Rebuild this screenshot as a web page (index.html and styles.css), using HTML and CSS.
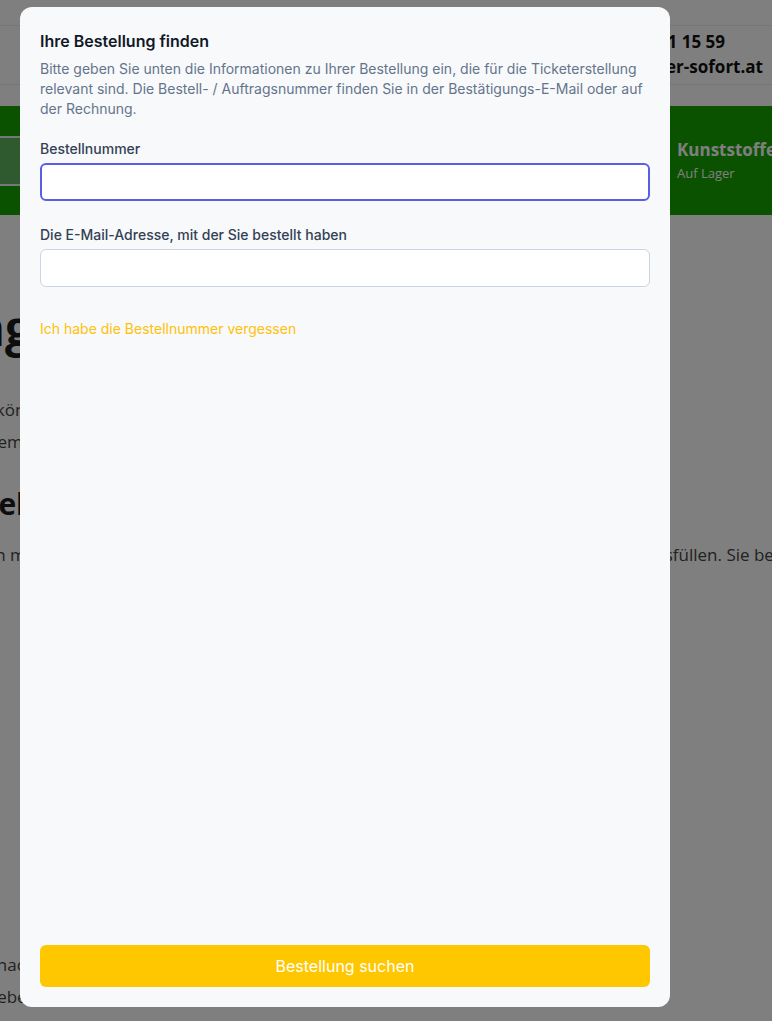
FILE: index.html
```html
<!DOCTYPE html>
<html lang="de">
<head>
  <meta charset="UTF-8">
  <meta name="viewport" content="width=device-width, initial-scale=1.0">
  <title>Ihre Bestellung finden</title>
  <link rel="stylesheet" href="styles.css">
</head>
<body>
  <div class="site">
    <div class="site-top"></div>
    <header class="site-header">
      <div class="contact">
        <span class="contact-phone">Tel.: +43 (0) 1 15 59</span>
        <span class="contact-mail">office@kunststoffhaendler-sofort.at</span>
      </div>
    </header>

    <div class="promo">
      <div class="promo-img"></div>
      <div class="promo-item">
        <strong>Kunststoffe</strong>
        <span>Auf Lager</span>
      </div>
    </div>

    <main class="page-main">
      <h1 class="page-title">Bestellung</h1>
      <p class="page-text">
        <span class="line line-1">Hier können Sie ein Ticket zu Ihrer Bestellung erstellen.</span>
        <span class="line line-2">dem Kundenservice werden alle Angaben übermittelt.</span>
      </p>
      <h2 class="page-subtitle">Schnelle Hilfe</h2>
      <p class="page-text">
        <span class="line line-3">Dann müssen Sie das obige Formular mit den Angaben zu Ihrer Bestellung vollständig ausfüllen. Sie bereiten so Ihr Ticket vor.</span>
      </p>
      <p class="page-text page-text-end">
        <span class="line line-4">Danach erhalten Sie eine Bestätigung per E-Mail.</span>
        <span class="line line-5">Gegebenenfalls prüfen wir Ihre Angaben genauer.</span>
      </p>
    </main>
  </div>

  <div class="overlay">
    <form class="modal">
      <h3 class="modal-title">Ihre Bestellung finden</h3>
      <p class="modal-desc">Bitte geben Sie unten die Informationen zu Ihrer Bestellung ein, die für die Ticketerstellung relevant sind. Die Bestell- / Auftragsnummer finden Sie in der Bestätigungs-E-Mail oder auf der Rechnung.</p>

      <label class="field">
        <span class="field-label">Bestellnummer</span>
        <input type="text" class="field-input is-focused">
      </label>

      <label class="field">
        <span class="field-label">Die E-Mail-Adresse, mit der Sie bestellt haben</span>
        <input type="email" class="field-input">
      </label>

      <a href="#" class="forgot-link">Ich habe die Bestellnummer vergessen</a>

      <button type="button" class="submit-btn">Bestellung suchen</button>
    </form>
  </div>
</body>
</html>
```

FILE: styles.css
```css
html, body {
  margin: 0;
  padding: 0;
}
body {
  font-family: "Open Sans", "Liberation Sans", sans-serif;
  color: #444;
  background: #fff;
  overflow: hidden;
  height: 1021px;
}

/* background page */
.site-top {
  height: 25px;
  border-bottom: 1px solid #ececec;
}
.site-header {
  height: 58px;
  border-bottom: 1px solid #ececec;
  display: flex;
  justify-content: flex-end;
}
.contact {
  display: flex;
  flex-direction: column;
  align-items: flex-end;
  font-weight: 700;
  font-size: 17px;
  line-height: 25px;
  color: #111;
  padding-top: 3px;
}
.contact-phone {
  margin-right: 47px;
}
.contact-mail {
  margin-right: 9px;
}
.promo {
  margin-top: 21px;
  height: 109px;
  background: #14a400;
  display: flex;
  align-items: center;
}
.promo-img {
  width: 60px;
  height: 46px;
  margin-left: -30px;
  background: #5fb25f;
  border-top: 2px solid #eee;
  border-bottom: 2px solid #eee;
}
.promo-item {
  margin-left: auto;
  width: 95px;
  display: flex;
  flex-direction: column;
  color: #fff;
  white-space: nowrap;
}
.promo-item strong {
  font-size: 17px;
  line-height: 24px;
}
.promo-item span {
  font-size: 13px;
  line-height: 20px;
  margin-top: 1px;
}

.page-main {
  white-space: nowrap;
}
.page-title {
  margin: 84px 0 0 -221px;
  font-size: 48px;
  line-height: 58px;
  font-weight: 700;
  color: #1a1a1a;
}
.page-text {
  margin: 37px 0 0;
  font-size: 17px;
  line-height: 32px;
}
.line {
  display: block;
}
.line-1 { margin-left: -42px; }
.line-2 { margin-left: -13px; }
.line-3 { margin-left: -37px; }
.line-4 { margin-left: -25px; }
.line-5 { margin-left: -34px; }
.page-subtitle {
  margin: 26px 0 0 -73px;
  font-size: 30px;
  line-height: 39px;
  font-weight: 700;
  color: #1a1a1a;
}
.page-subtitle + .page-text {
  margin-top: 16px;
}
.page-text-end {
  margin-top: 378px;
}

/* modal */
.overlay {
  position: fixed;
  inset: 0;
  background: rgba(0, 0, 0, 0.5);
}
.modal {
  position: absolute;
  top: 7px;
  left: 20px;
  width: 650px;
  height: 1000px;
  box-sizing: border-box;
  padding: 22px 20px 20px;
  background: #f8f9fb;
  border-radius: 12px;
  display: flex;
  flex-direction: column;
  font-family: Inter, "Liberation Sans", sans-serif;
}
.modal-title {
  margin: 0;
  font-size: 16px;
  line-height: 24px;
  font-weight: 600;
  color: #111827;
}
.modal-desc {
  margin: 6px 0 0;
  font-size: 14px;
  line-height: 20px;
  color: #64748b;
}
.field {
  display: flex;
  flex-direction: column;
  gap: 4px;
  margin-top: 20px;
}
.field + .field {
  margin-top: 24px;
}
.field-label {
  font-size: 14px;
  line-height: 20px;
  font-weight: 500;
  color: #334155;
}
.field-input {
  height: 38px;
  box-sizing: border-box;
  border: 1px solid #cbd5e1;
  border-radius: 6px;
  background: #fff;
  font: inherit;
  outline: none;
}
.field-input.is-focused {
  border: 2px solid #5a5de6;
}
.forgot-link {
  align-self: flex-start;
  margin-top: 32px;
  font-size: 14px;
  line-height: 20px;
  color: #ffc107;
  text-decoration: none;
}
.submit-btn {
  margin-top: auto;
  height: 42px;
  border: none;
  border-radius: 6px;
  background: #ffc700;
  color: #fff;
  font-family: inherit;
  font-size: 16px;
  cursor: pointer;
}
```
